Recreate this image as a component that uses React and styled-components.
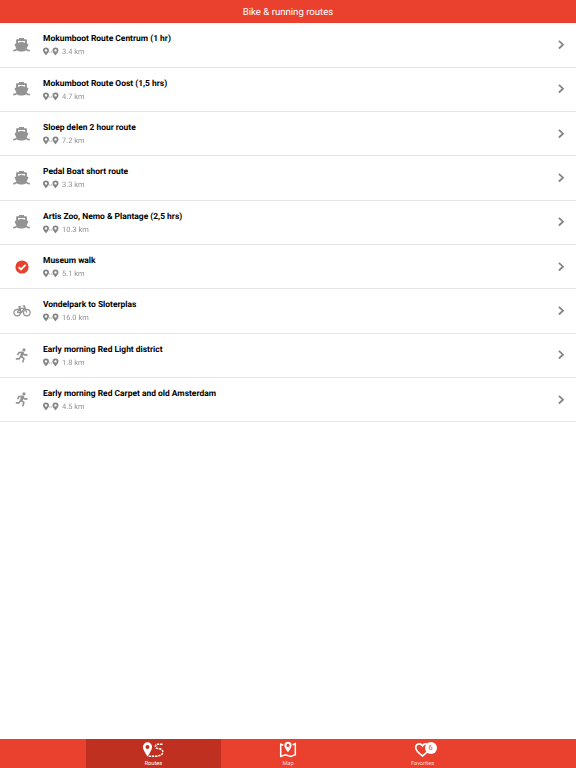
import React from "react";
import styled, { createGlobalStyle } from "styled-components";

const GlobalStyle = createGlobalStyle`
  * { box-sizing: border-box; }
  body { margin: 0; background: #fff; font-family: Roboto, sans-serif; text-rendering: geometricPrecision; -webkit-font-smoothing: antialiased; }
`;
const Screen = styled.div`
  height: 768px;
  display: flex;
  flex-direction: column;
  overflow: hidden;
`;
const Header = styled.header`
  height: 23px;
  flex: none;
  background: #e9412d;
  color: #fff;
  font-size: 9.6px;
  line-height: 25px;
  text-align: center;
`;
const RouteList = styled.main`
  flex: 1;
  padding-top: 0.15px;
`;
const Row = styled.div`
  height: 44.36px;
  display: flex;
  align-items: center;
  border-bottom: 1px solid #e4e4e4;
`;
const IconCell = styled.div`
  width: 43px;
  height: 18px;
  display: flex;
  justify-content: center;
  align-items: center;
  color: #939393;
  svg { display: block; }
`;
const Details = styled.div`
  flex: 1;
  padding-top: 1px;
`;
const Title = styled.div`
  font-size: 8.45px;
  font-weight: 700;
  height: 13px;
  line-height: 14px;
  color: #000;
`;
const Distance = styled.div`
  display: flex;
  align-items: center;
  height: 13px;
  font-size: 7.47px;
  color: #949494;
  will-change: transform;
  svg { margin-right: 3px; }
`;
const Chevron = styled.svg`
  margin-right: 11px;
  display: block;
`;
const TabBar = styled.nav`
  height: 29px;
  flex: none;
  display: flex;
  justify-content: center;
  background: #e9412d;
`;
const Tab = styled.div`
  width: 134.6px;
  display: flex;
  flex-direction: column;
  align-items: center;
  padding-top: 2px;
  background: ${(p) => (p.$active ? "#bf3020" : "transparent")};
  color: ${(p) => (p.$active ? "#fff" : "#ffd6d0")};
  font-size: 5.65px;
  line-height: 9px;
  svg { display: block; flex: none; }
`;
const TabLabel = styled.span`
  margin-top: 2px;
`;
const HeartBox = styled.div`
  position: relative;
`;
const Badge = styled.span`
  position: absolute;
  left: 10.5px;
  top: 0.5px;
  width: 12px;
  height: 12px;
  border-radius: 50%;
  background: #fff;
  color: #e9412d;
  font-size: 7.4px;
  line-height: 12.5px;
  text-align: center;
`;

const icons = {
  boat: (
    <svg width="17" height="14" viewBox="0 0 17 14">
      <path fill="currentColor" fillRule="evenodd" d="M6 0h5v1.200h2.200c.4 0 .7.300.7.700v3.700l1.100.5c.4.200.5.500.300.900l-1.700 3.400c.8.800 1.900 1.300 3.200 1.300v1.700c-1.400 0-2.700-.4-3.700-1.200-1.300 1-2.600 1.400-4.600 1.400s-3.300-.4-4.600-1.400C2.900 13 1.600 13.400.2 13.400v-1.700c1.300 0 2.400-.5 3.200-1.300L1.700 7c-.2-.4-.1-.7.300-.9l1.100-.5V1.900c0-.4.300-.7.700-.7H6zM5 3.100v1.700l3.500-1 3.500 1V3.100z" />
    </svg>
  ),
  check: (
    <svg width="14" height="14" viewBox="0 0 14 14">
      <circle cx="7" cy="7" r="6.600" fill="#e9412d" />
      <path d="M3.600 7.200 6 9.500l4.600-4.600" fill="none" stroke="#fff" strokeWidth="1.800" />
    </svg>
  ),
  bike: (
    <svg width="18" height="12" viewBox="0 0 18 12" fill="none" stroke="currentColor" strokeWidth="1.300">
      <circle cx="4.200" cy="7.600" r="3.300" />
      <circle cx="13.800" cy="7.600" r="3.300" />
      <path d="M4.200 7.600 6.400 3.400h5L8.400 7.600H4.200M5.300 1.700h2.500M6.400 2l2 5.600M9.800 1h1.600l2.400 6.600" />
    </svg>
  ),
  run: (
    <svg width="15" height="15" viewBox="-0.6 0 15 15" fill="none" stroke="currentColor" strokeLinecap="round" strokeLinejoin="round">
      <circle cx="9.400" cy="1.900" r="1.600" fill="currentColor" stroke="none" />
      <path strokeWidth="1.600" d="M3.200 6.600 4.500 4.500l3.200-.2 2.100 2.600h2.600M1.900 10.900h2.600l1.300-2M6.800 8.600l2.500 1.800-1 3.400" />
      <path strokeWidth="2.700" d="M8 5.100 6.700 8.300" />
    </svg>
  ),
};

const DistanceIcon = () => (
  <svg width="16" height="9" viewBox="0 0 16 9">
    <path fill="#858585" fillRule="evenodd" d="M3 .5a3 3 0 0 1 3 3C6 5.400 3 8.300 3 8.300S0 5.400 0 3.500a3 3 0 0 1 3-3zm0 1.700a1.200 1.200 0 1 0 0 2.400 1.200 1.200 0 0 0 0-2.400z" />
    <path fill="#858585" fillRule="evenodd" d="M12.500.5a3 3 0 0 1 3 3c0 1.900-3 4.800-3 4.800s-3-2.900-3-4.800a3 3 0 0 1 3-3zm0 1.700a1.200 1.200 0 1 0 0 2.400 1.200 1.200 0 0 0 0-2.400z" />
    <path d="M6 5h3.500" stroke="#aaa" strokeWidth=".9" strokeDasharray="1.500 .5" />
  </svg>
);

const routes = [
  ["boat", "Mokumboot Route Centrum (1 hr)", "3.4 km"],
  ["boat", "Mokumboot Route Oost (1,5 hrs)", "4.7 km"],
  ["boat", "Sloep delen 2 hour route", "7.2 km"],
  ["boat", "Pedal Boat short route", "3.3 km"],
  ["boat", "Artis Zoo, Nemo & Plantage (2,5 hrs)", "10.3 km"],
  ["check", "Museum walk", "5.1 km"],
  ["bike", "Vondelpark to Sloterplas", "16.0 km"],
  ["run", "Early morning Red Light district", "1.8 km"],
  ["run", "Early morning Red Carpet and old Amsterdam", "4.5 km"],
];

export default function App() {
  return (
    <Screen>
      <GlobalStyle />
      <Header>Bike &amp; running routes</Header>
      <RouteList>
        {routes.map(([icon, title, distance]) => (
          <Row key={title}>
            <IconCell>{icons[icon]}</IconCell>
            <Details>
              <Title>{title}</Title>
              <Distance><DistanceIcon />{distance}</Distance>
            </Details>
            <Chevron width="8" height="10" viewBox="0 0 8 10">
              <path d="M1.900.9 6 4.700 1.900 8.500" fill="none" stroke="#858585" strokeWidth="1.800" />
            </Chevron>
          </Row>
        ))}
      </RouteList>
      <TabBar>
        <Tab $active>
          <svg width="22" height="17" viewBox="0 0 22 17">
            <path fill="#fff" fillRule="evenodd" d="M5.500 1.300a4.600 4.600 0 0 1 4.600 4.600c0 3-4.600 9.600-4.600 9.600S.9 8.900.9 5.900A4.600 4.600 0 0 1 5.500 1.300zm0 2.600a2 2 0 1 0 0 4 2 2 0 0 0 0-4z" />
            <path d="M20.500 3.300h-4.500c-3.400.1-3.400 3.800-.2 4.200l2.700.5c3.200.9 3 5.100 0 6.200l-3.500 1H5.800" fill="none" stroke="#fff" strokeWidth="1.500" strokeDasharray="2.400 .8" />
          </svg>
          <TabLabel>Routes</TabLabel>
        </Tab>
        <Tab>
          <svg width="18" height="17" viewBox="0 0 18 17">
            <path d="M4.300 4.200 1.700 3.200v12.200l4.600-1.600 5.400 1.600 4.600-1.600V2.700l-2.600 1" fill="none" stroke="#fff" strokeWidth="1.500" />
            <path fill="#fff" fillRule="evenodd" d="M9 .8a3.600 3.600 0 0 1 3.600 3.600C12.600 6.800 9 11.200 9 11.200S5.400 6.800 5.400 4.400A3.600 3.600 0 0 1 9 .8zm0 2a1.600 1.600 0 1 0 0 3.200 1.600 1.600 0 0 0 0-3.200z" />
          </svg>
          <TabLabel>Map</TabLabel>
        </Tab>
        <Tab>
          <HeartBox>
            <svg width="17" height="17" viewBox="0 0 17 17">
              <path d="M8.500 15C4.200 11.700 1.700 9.400 1.700 6.500c0-3.900 4.900-4.900 6.800-1.600 1.900-3.300 6.800-2.300 6.800 1.600 0 2.900-2.500 5.200-6.800 8.500z" fill="none" stroke="#fff" strokeWidth="1.600" />
            </svg>
            <Badge>6</Badge>
          </HeartBox>
          <TabLabel>Favorites</TabLabel>
        </Tab>
      </TabBar>
    </Screen>
  );
}
